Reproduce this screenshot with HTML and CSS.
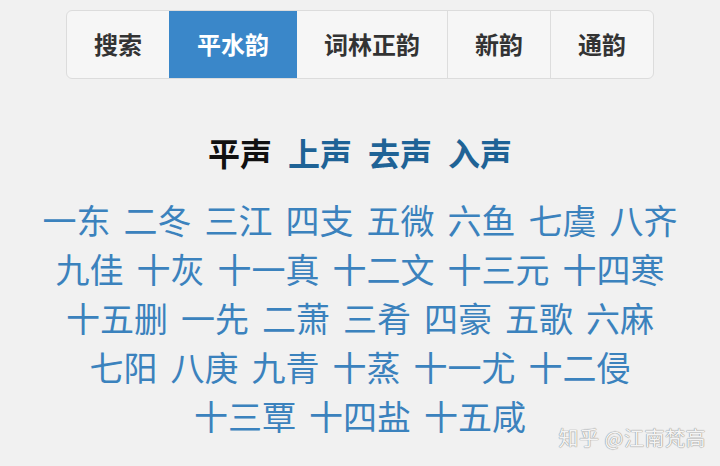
FILE: index.html
```html
<!DOCTYPE html>
<html lang="zh">
<head>
<meta charset="utf-8">
<title>平水韵</title>
<link rel="stylesheet" href="styles.css">
</head>
<body>
<div class="page">
  <nav class="tabs">
    <a class="tab">搜索</a>
    <a class="tab active">平水韵</a>
    <a class="tab">词林正韵</a>
    <a class="tab">新韵</a>
    <a class="tab">通韵</a>
  </nav>

  <div class="tones">
    <span class="tone current">平声</span>
    <a class="tone">上声</a>
    <a class="tone">去声</a>
    <a class="tone">入声</a>
  </div>

  <div class="rhymes">
    <div class="line">
      <a>一东</a><a>二冬</a><a>三江</a><a>四支</a><a>五微</a><a>六鱼</a><a>七虞</a><a>八齐</a>
    </div>
    <div class="line">
      <a>九佳</a><a>十灰</a><a>十一真</a><a>十二文</a><a>十三元</a><a>十四寒</a>
    </div>
    <div class="line">
      <a>十五删</a><a>一先</a><a>二萧</a><a>三肴</a><a>四豪</a><a>五歌</a><a>六麻</a>
    </div>
    <div class="line">
      <a>七阳</a><a>八庚</a><a>九青</a><a>十蒸</a><a>十一尤</a><a>十二侵</a>
    </div>
    <div class="line">
      <a>十三覃</a><a>十四盐</a><a>十五咸</a>
    </div>
  </div>

  <div class="watermark">知乎 @江南梵高</div>
</div>
</body>
</html>
```

FILE: styles.css
```css
html, body {
  margin: 0;
  padding: 0;
}

body {
  background: #f1f1f1;
  font-family: "Noto Sans CJK SC", "Noto Sans", sans-serif;
  width: 720px;
  height: 466px;
  overflow: hidden;
}

.page {
  position: relative;
  width: 720px;
  height: 466px;
  padding-top: 10px;
  box-sizing: border-box;
}

.tabs {
  display: flex;
  width: max-content;
  margin: 0 auto;
  border: 1px solid #dcdcdc;
  border-radius: 6px;
  background: #f6f6f6;
  overflow: hidden;
}

.tab {
  display: flex;
  align-items: center;
  justify-content: center;
  height: 67px;
  padding: 0 27px 3px;
  box-sizing: border-box;
  font-size: 24px;
  font-weight: 700;
  color: #333333;
  border-left: 1px solid #dddddd;
  white-space: nowrap;
}

.tab:first-child {
  border-left: none;
}

.tab.active {
  background: #3a87c9;
  color: #ffffff;
  border-left-color: #3a87c9;
}

.tab.active + .tab {
  border-left-color: #3a87c9;
}

.tones {
  display: flex;
  justify-content: center;
  gap: 16px;
  margin-top: 53px;
  line-height: 40px;
  font-size: 32px;
  font-weight: 700;
}

.tone {
  color: #1f6396;
}

.tone.current {
  color: #111111;
}

.rhymes {
  margin-top: 23px;
}

.line {
  display: flex;
  justify-content: center;
  gap: 13px;
  font-size: 34px;
  line-height: 49px;
  color: #3b82bd;
}

.watermark {
  position: absolute;
  right: 14px;
  bottom: 16px;
  font-size: 20px;
  line-height: 24px;
  color: #f4f4f4;
  text-shadow: 0 0 1px #8a8a8a, 0 0 1px #8a8a8a;
  letter-spacing: 0.5px;
}
```
